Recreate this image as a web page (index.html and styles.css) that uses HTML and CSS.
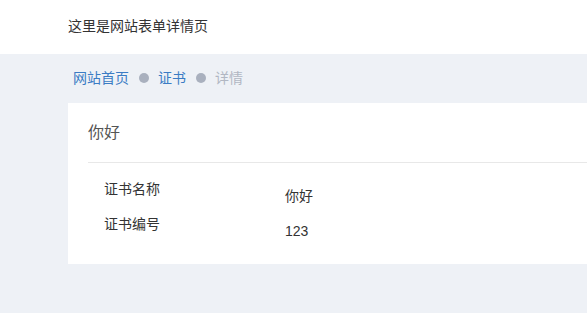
FILE: index.html
```html
<!DOCTYPE html>
<html>
  <head>
    <meta charset="UTF-8" />
    <title>表单详情</title>
    <link rel="stylesheet" href="styles.css">
  </head>
  <body>
    <div class="topbar">这里是网站表单详情页</div>
    <div class="main">
      <div class="breadcrumb">
        <a class="crumb" href="#">网站首页</a>
        <span class="dot"></span>
        <a class="crumb" href="#">证书</a>
        <span class="dot"></span>
        <span class="crumb current">详情</span>
      </div>

      <div class="card">
        <div class="card-title">你好</div>
        <div class="fields">
          <div class="row">
            <span class="label">证书名称</span>
            <span class="value">你好</span>
          </div>
          <div class="row">
            <span class="label">证书编号</span>
            <span class="value">123</span>
          </div>
        </div>
      </div>
    </div>
  </body>
</html>
```

FILE: styles.css
```css
/* Page reset */
html, body {
  margin: 0;
  padding: 0;
  height: 100%;
  overflow: hidden;
  font-family: "Liberation Sans", "Noto Sans CJK SC", sans-serif;
  font-size: 14px;
  color: #333;
  background: #eef1f6;
}

/* Top bar */
.topbar {
  height: 50px;
  padding: 0 0 4px 68px;
  display: flex;
  align-items: center;
  background: #fff;
}

/* Grey content area */
.main {
  padding-left: 68px;
}

.breadcrumb {
  display: flex;
  align-items: center;
  height: 20px;
  line-height: 20px;
  padding: 14px 0 15px 5px;
}

.crumb {
  color: #3b7cc4;
  text-decoration: none;
}

.crumb.current {
  color: #b1b7c3;
}

.dot {
  width: 10px;
  height: 10px;
  border-radius: 50%;
  background: #a9b0be;
  margin: 0 9px 0 10px;
}

/* Card */
.card {
  background: #fff;
  padding-bottom: 14px;
}

.card-title {
  margin-left: 20px;
  padding: 19px 0 18px;
  line-height: 22px;
  font-size: 16px;
  color: #555;
  border-bottom: 1px solid #e8e8e8;
}

.fields {
  padding: 16px 0 1px 36px;
}

.row {
  display: flex;
  align-items: flex-start;
  height: 35px;
  line-height: 20px;
}

.label {
  width: 181px;
}

.value {
  margin-top: 7px;
}
```
